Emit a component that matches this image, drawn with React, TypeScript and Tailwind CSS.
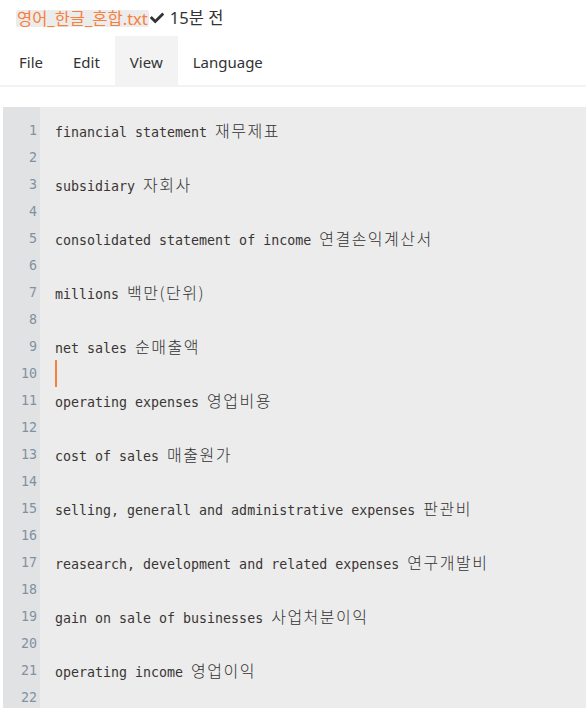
import { FaCheck } from 'react-icons/fa'

const lines: [string, string][] = [
  ['financial statement ', '재무제표'],
  ['', ''],
  ['subsidiary ', '자회사'],
  ['', ''],
  ['consolidated statement of income ', '연결손익계산서'],
  ['', ''],
  ['millions ', '백만(단위)'],
  ['', ''],
  ['net sales ', '순매출액'],
  ['', ''],
  ['operating expenses ', '영업비용'],
  ['', ''],
  ['cost of sales ', '매출원가'],
  ['', ''],
  ['selling, generall and administrative expenses ', '판관비'],
  ['', ''],
  ['reasearch, development and related expenses ', '연구개발비'],
  ['', ''],
  ['gain on sale of businesses ', '사업처분이익'],
  ['', ''],
  ['operating income ', '영업이익'],
  ['', ''],
]

const menus = ['File', 'Edit', 'View', 'Language']

export default function App() {
  return (
    <div className="flex h-[708px] flex-col overflow-hidden bg-white font-['Noto_Sans','Noto_Sans_CJK_KR',sans-serif] text-[#333]">
      {/* title row */}
      <div className="flex h-[36px] shrink-0 items-center pl-[16px] text-[16.5px]">
        <span className="rounded-[2px] bg-[#ececec] px-[1px] leading-[17px] text-[#f7803c]">영어_한글_혼합.txt</span>
        <FaCheck className="ml-[1px] h-[14px] w-[14px] text-[#333]" />
        <span className="ml-[6px]">15분 전</span>
      </div>

      {/* menu */}
      <div className="flex h-[51px] shrink-0 border-b-2 border-[#f3f3f3] pl-[4px]">
        {menus.map((m) => (
          <div
            key={m}
            className={`flex items-center px-[15px] pt-[3px] text-[15px] ${m === 'View' ? 'bg-[#f3f3f3]' : ''}`}
          >
            {m}
          </div>
        ))}
      </div>

      {/* editor */}
      <div className="ml-[3px] mt-[20px] flex min-h-0 flex-1 overflow-hidden bg-[#ececec]">
        <div className="w-[37px] shrink-0 bg-[#e1e2e4] pt-[10px] pr-[3px] text-right font-['DejaVu_Sans_Mono',monospace] text-[13.3px] text-[#8291a0]">
          {lines.map((_, i) => (
            <div key={i} className="h-[27px] leading-[27px]">
              {i + 1}
            </div>
          ))}
        </div>
        <div className="flex-1 pt-[10px] pl-[15px] font-['DejaVu_Sans_Mono','Noto_Sans_CJK_KR',monospace] text-[13.3px] text-[#3a3533]">
          {lines.map(([en, ko], i) => (
            <div key={i} className="relative h-[27px] whitespace-pre leading-[27px]">
              {i === 9 && <span className="absolute left-0 top-0 h-[27px] w-[2px] bg-[#f7803c]" />}
              {en}
              <span className="font-['Noto_Sans_CJK_KR',sans-serif] text-[16px] font-light tracking-[1.5px] text-[#333]">{ko}</span>
            </div>
          ))}
        </div>
      </div>
    </div>
  )
}
